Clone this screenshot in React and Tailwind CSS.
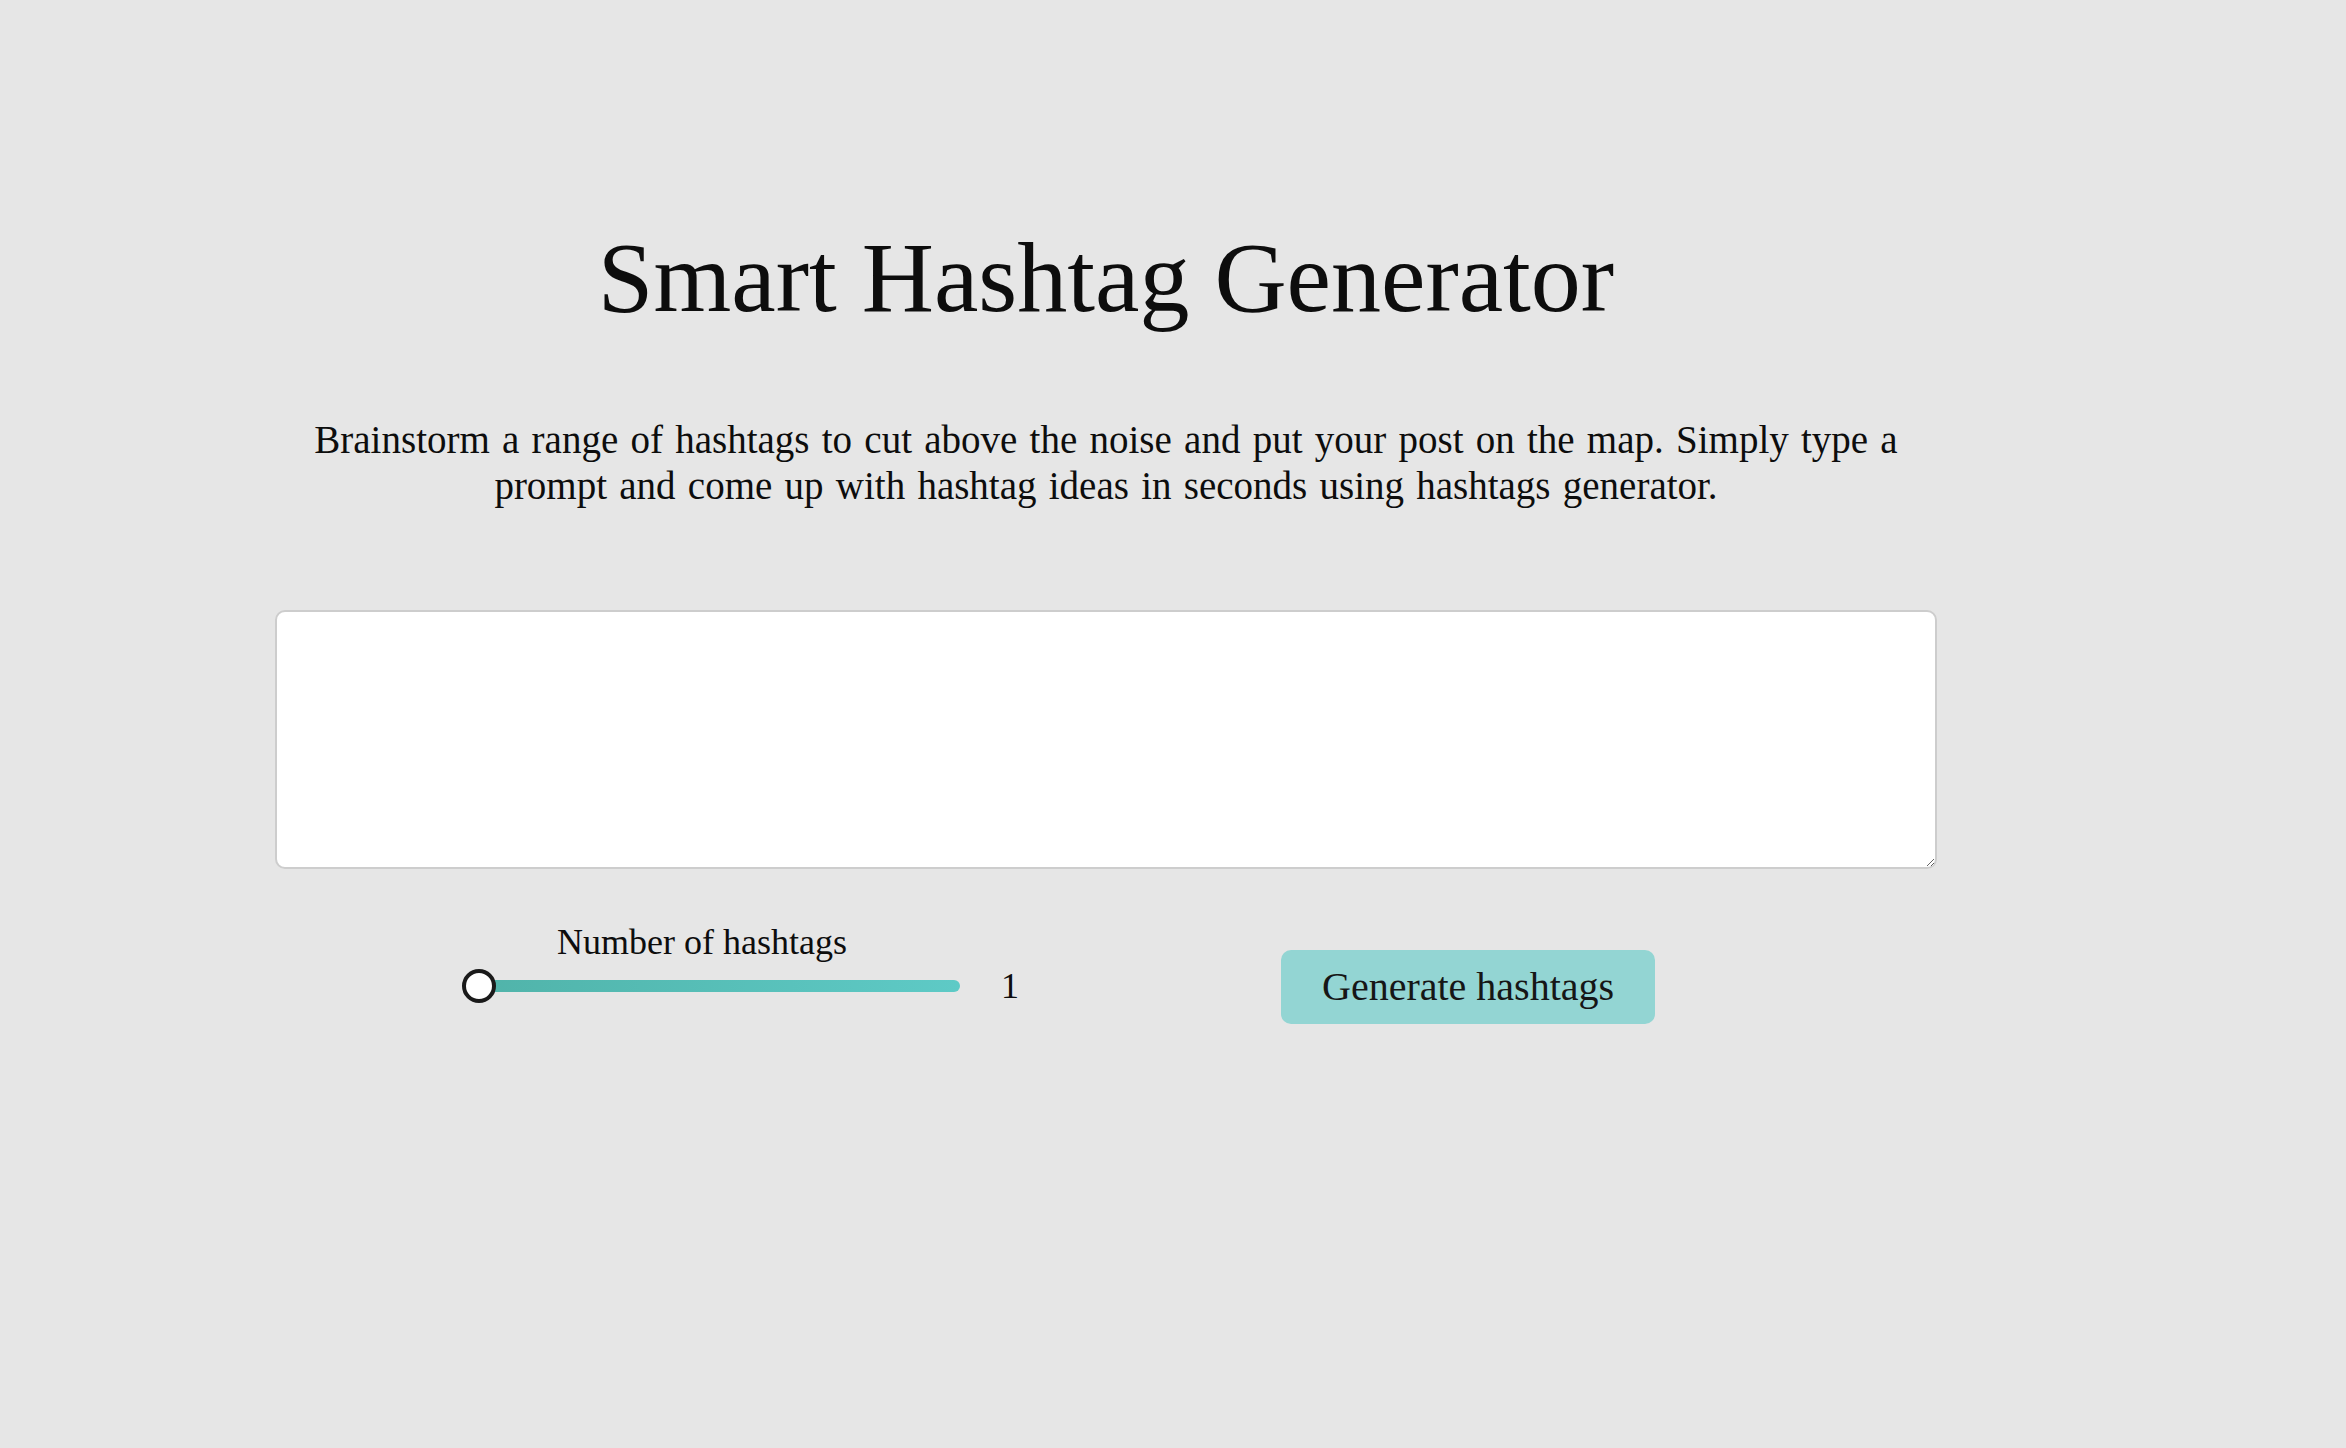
export default function App() {
  return (
    <div className="min-h-screen bg-[#e6e6e6] text-[#0d0d0d]" style={{ fontFamily: '"Liberation Serif", "Times New Roman", serif' }}>
      <div className="ml-[275px] w-[1662px] pt-[228px]">
        <h1 className="text-center text-[100px] font-normal leading-[100px]">Smart Hashtag Generator</h1>

        <p className="mt-[89px] text-center text-[39px] leading-[46px] [word-spacing:2.5px]">
          Brainstorm a range of hashtags to cut above the noise and put your post on the map. Simply type a prompt and come up with hashtag ideas in seconds using hashtags generator.
        </p>

        <textarea className="mt-[101px] block h-[259px] w-full rounded-[10px] border-2 border-[#cdcdcd] bg-white p-3 text-[24px] outline-none" />

        <div className="mt-[53px] flex items-start">
          {/* slider group */}
          <div className="ml-[187px] flex flex-col">
            <div className="ml-[95px] text-[36px] leading-[40px]">Number of hashtags</div>
            <div className="mt-[4px] flex h-[40px] items-center">
              <div className="relative flex h-[34px] w-[498px] items-center">
                <div className="ml-[8px] h-[12px] flex-1 rounded-full bg-gradient-to-r from-[#50b3a9] to-[#5ecac6]" />
                <div className="absolute left-0 top-0 h-[34px] w-[34px] rounded-full border-[4px] border-[#1a1a1a] bg-white" />
              </div>
              <span className="ml-[41px] text-[36px] leading-[40px]">1</span>
            </div>
          </div>

          <button className="ml-[262px] mt-[28px] h-[74px] rounded-[10px] bg-[#93d5d3] px-[41px] text-[40px] leading-[74px] text-[#161616]">
            Generate hashtags
          </button>
        </div>
      </div>
    </div>
  );
}
